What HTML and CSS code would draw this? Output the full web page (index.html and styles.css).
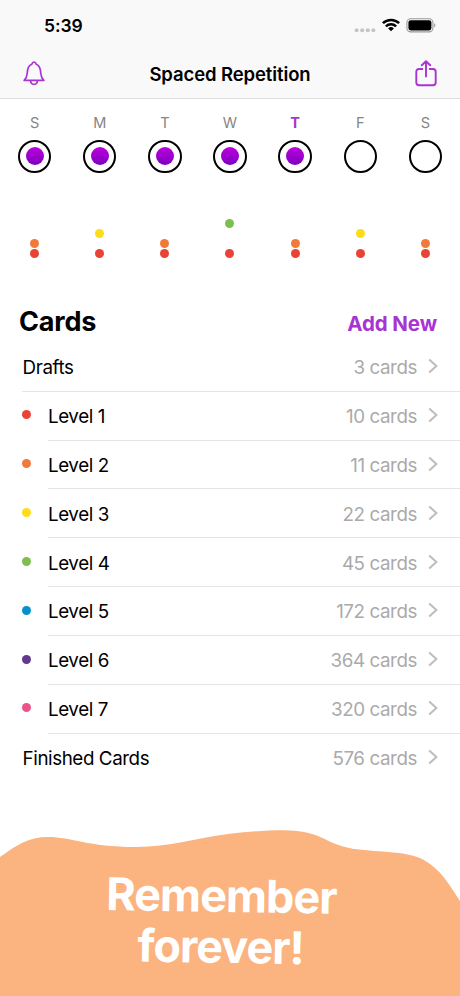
FILE: index.html
```html
<!DOCTYPE html>
<html lang="en">
<head>
    <meta charset="UTF-8">
    <meta name="viewport" content="width=device-width, initial-scale=1.0">
    <title>Spaced Repetition</title>
    <link rel="stylesheet" href="styles.css">
</head>
<body>

<header class="header">
    <div class="status-bar">
        <span class="time">5:39</span>
        <div class="status-icons">
            <svg class="signal" width="22" height="14" viewBox="0 0 22 14" fill="#c4c4c4">
                <circle cx="2.6" cy="7.2" r="2"/><circle cx="8.2" cy="7.2" r="2"/><circle cx="13.8" cy="7.2" r="2"/><circle cx="19.4" cy="7.2" r="2"/>
            </svg>
            <svg class="wifi" width="18" height="14" viewBox="0 0 18 14" fill="none" stroke="#000" stroke-width="2.5">
                <path d="M0.9 5.2A11.6 11.6 0 0 1 17.1 5.2"/>
                <path d="M3.9 8.4A7.3 7.3 0 0 1 14.1 8.4"/>
                <path d="M9 13.2L6.1 10.4A4.1 4.1 0 0 1 11.9 10.4Z" fill="#000" stroke="none"/>
            </svg>
            <svg class="battery" width="30" height="15" viewBox="0 0 30 15">
                <rect x="0.9" y="0.7" width="26" height="13.2" rx="3.8" fill="none" stroke="#999" stroke-width="1.1"/>
                <rect x="2.4" y="2.2" width="23" height="10.2" rx="2.3"/>
                <path d="M28.2 5.2C29.8 5.8 29.8 8.8 28.2 9.4Z" fill="#999"/>
            </svg>
        </div>
    </div>
    <nav class="nav-bar">
        <svg width="22" height="26" viewBox="0 0 22 26" fill="none" stroke="#a834d2" stroke-width="1.7" stroke-linejoin="round" stroke-linecap="round">
            <path d="M1.2 19.4C3.3 17.2 4 15.5 4.2 12.5C4.4 6.5 6.2 4.1 8.8 3.2C9.2 1.7 10 1.2 11 1.2C12 1.2 12.8 1.7 13.2 3.2C15.8 4.1 17.6 6.5 17.8 12.5C18 15.5 18.7 17.2 20.8 19.4Z"/>
            <path d="M7.6 19.8C7.9 24.6 14.1 24.6 14.4 19.8"/>
        </svg>
        <h1>Spaced Repetition</h1>
        <svg class="share" width="22" height="27" viewBox="0 0 22 27" fill="none" stroke="#a834d2" stroke-width="1.9" stroke-linejoin="round" stroke-linecap="round">
            <path d="M7.3 9H4C2.3 9 1.3 10 1.3 11.7V22.6C1.3 24.3 2.3 25.3 4 25.3H18C19.7 25.3 20.7 24.3 20.7 22.6V11.7C20.7 10 19.7 9 18 9H14.7"/>
            <path d="M11 16.5V1.5M6.8 5.3L11 1.3L15.2 5.3"/>
        </svg>
    </nav>
</header>

<main>
    <section class="week">
        <div class="day">
            <span class="day-name">S</span>
            <div class="ring done"></div>
            <div class="levels"><i class="dot level-2"></i><i class="dot level-1"></i></div>
        </div>
        <div class="day">
            <span class="day-name">M</span>
            <div class="ring done"></div>
            <div class="levels"><i class="dot level-3"></i><i class="dot level-1"></i></div>
        </div>
        <div class="day">
            <span class="day-name">T</span>
            <div class="ring done"></div>
            <div class="levels"><i class="dot level-2"></i><i class="dot level-1"></i></div>
        </div>
        <div class="day">
            <span class="day-name">W</span>
            <div class="ring done"></div>
            <div class="levels"><i class="dot level-4"></i><i class="dot level-1"></i></div>
        </div>
        <div class="day">
            <span class="day-name today">T</span>
            <div class="ring done"></div>
            <div class="levels"><i class="dot level-2"></i><i class="dot level-1"></i></div>
        </div>
        <div class="day">
            <span class="day-name">F</span>
            <div class="ring"></div>
            <div class="levels"><i class="dot level-3"></i><i class="dot level-1"></i></div>
        </div>
        <div class="day">
            <span class="day-name">S</span>
            <div class="ring"></div>
            <div class="levels"><i class="dot level-2"></i><i class="dot level-1"></i></div>
        </div>
    </section>

    <div class="cards-header">
        <h2>Cards</h2>
        <a class="add-new">Add New</a>
    </div>

    <ul class="cards">
        <li class="plain"><div class="row"><span>Drafts</span><span class="count">3 cards</span><svg class="chevron" viewBox="0 0 10 16"><path d="M1.2 1.4L8.4 8L1.2 14.6"/></svg></div></li>
        <li><i class="dot level-1"></i><div class="row"><span>Level 1</span><span class="count">10 cards</span><svg class="chevron" viewBox="0 0 10 16"><path d="M1.2 1.4L8.4 8L1.2 14.6"/></svg></div></li>
        <li><i class="dot level-2"></i><div class="row"><span>Level 2</span><span class="count">11 cards</span><svg class="chevron" viewBox="0 0 10 16"><path d="M1.2 1.4L8.4 8L1.2 14.6"/></svg></div></li>
        <li><i class="dot level-3"></i><div class="row"><span>Level 3</span><span class="count">22 cards</span><svg class="chevron" viewBox="0 0 10 16"><path d="M1.2 1.4L8.4 8L1.2 14.6"/></svg></div></li>
        <li><i class="dot level-4"></i><div class="row"><span>Level 4</span><span class="count">45 cards</span><svg class="chevron" viewBox="0 0 10 16"><path d="M1.2 1.4L8.4 8L1.2 14.6"/></svg></div></li>
        <li><i class="dot level-5"></i><div class="row"><span>Level 5</span><span class="count">172 cards</span><svg class="chevron" viewBox="0 0 10 16"><path d="M1.2 1.4L8.4 8L1.2 14.6"/></svg></div></li>
        <li><i class="dot level-6"></i><div class="row"><span>Level 6</span><span class="count">364 cards</span><svg class="chevron" viewBox="0 0 10 16"><path d="M1.2 1.4L8.4 8L1.2 14.6"/></svg></div></li>
        <li><i class="dot level-7"></i><div class="row"><span>Level 7</span><span class="count">320 cards</span><svg class="chevron" viewBox="0 0 10 16"><path d="M1.2 1.4L8.4 8L1.2 14.6"/></svg></div></li>
        <li class="plain"><div class="row"><span>Finished Cards</span><span class="count">576 cards</span><svg class="chevron" viewBox="0 0 10 16"><path d="M1.2 1.4L8.4 8L1.2 14.6"/></svg></div></li>
    </ul>
</main>

<footer class="banner">
    <svg class="wave" width="460" height="90" viewBox="0 0 460 90">
        <path d="M0 37C17 25 28 17 48 17C72 17 87 27 136 27C169 27 197 18 230 13.8C249 11.5 267 10.3 283 10.3C325 10.3 323 25.5 359 29.6C388 32.8 406 31.5 423 39.5C441 49 450 66 460 81V90H0Z" fill="#fbb37f"/>
    </svg>
    <p class="slogan">Remember<br>forever!</p>
</footer>

</body>
</html>
```
FILE: styles.css
```css
/* General Styling */
* {
    box-sizing: border-box;
}
body {
    font-family: Inter, "Liberation Sans", sans-serif;
    display: flex;
    flex-direction: column;
    width: 460px;
    height: 996px;
    margin: 0;
    overflow: hidden;
    background-color: #fff;
    color: #000;
}
h1, h2, p, ul {
    margin: 0;
    padding: 0;
}
svg {
    display: block;
    flex-shrink: 0;
}

/* Header */
.header {
    height: 99px;
    background-color: #f9f9f9;
    border-bottom: 1px solid #dedede;
}
.status-bar {
    display: flex;
    justify-content: space-between;
    align-items: center;
    height: 50px;
    padding: 0 24px 0 44px;
}
.time {
    font-size: 17.5px;
    font-weight: 600;
    letter-spacing: -0.1px;
}
.status-icons {
    display: flex;
    align-items: center;
    gap: 6px;
}
.signal {
    margin-top: 9px;
}
.nav-bar {
    display: flex;
    justify-content: space-between;
    align-items: center;
    height: 48px;
    padding: 0 23px;
}
.share {
    margin-bottom: 2px;
}
h1 {
    font-size: 18.5px;
    font-weight: 600;
    letter-spacing: -0.1px;
}

/* Week */
.week {
    display: grid;
    grid-template-columns: repeat(7, 1fr);
    height: 199px;
    padding: 13.5px 2px 0;
}
.day {
    display: flex;
    flex-direction: column;
    align-items: center;
}
.day-name {
    height: 20px;
    font-size: 14.5px;
    line-height: 20px;
    color: #858585;
}
.today {
    font-weight: 700;
    color: #a834d2;
}
.ring {
    display: flex;
    justify-content: center;
    align-items: center;
    width: 33.5px;
    height: 33.5px;
    margin-top: 7px;
    border: 2.4px solid #000;
    border-radius: 50%;
}
.done::before {
    content: "";
    width: 18px;
    height: 18px;
    border-radius: 50%;
    background: linear-gradient(#bd00df, #7d00be);
}
.levels {
    display: grid;
    grid-template-rows: repeat(4, 10px);
    align-items: center;
    margin-top: 45px;
}
.dot {
    width: 9px;
    height: 9px;
    border-radius: 50%;
}
.level-1 { grid-row: 4; background-color: #e84335; }
.level-2 { grid-row: 3; background-color: #f17a3a; }
.level-3 { grid-row: 2; background-color: #fddc18; }
.level-4 { grid-row: 1; background-color: #7cc04b; }
.level-5 { background-color: #078fcd; }
.level-6 { background-color: #623991; }
.level-7 { background-color: #e9558b; }

/* Cards */
.cards-header {
    display: flex;
    justify-content: space-between;
    align-items: baseline;
    height: 44.8px;
    padding: 7px 23px 0 19px;
}
h2 {
    font-size: 27px;
    font-weight: 700;
    letter-spacing: -0.2px;
}
.add-new {
    font-size: 20.5px;
    font-weight: 700;
    letter-spacing: -0.1px;
    color: #a834d2;
}
.cards {
    list-style: none;
}
.cards li {
    display: flex;
    align-items: center;
    height: 48.9px;
    padding-left: 22px;
    font-size: 18.8px;
    letter-spacing: -0.42px;
}
.cards .dot {
    margin: 0 17px 3px 0;
}
.row {
    display: flex;
    flex: 1;
    align-items: center;
    height: 100%;
    padding: 1.4px 22px 0 0;
    border-bottom: 1px solid #e4e4e4;
}
.plain .row {
    padding-left: 0.6px;
}
.cards li:last-child .row {
    border-bottom: none;
    padding-top: 0;
}
.count {
    margin-left: auto;
    color: #aaa;
}
.chevron {
    width: 10px;
    height: 16px;
    margin: 0 0 3px 11px;
    fill: none;
    stroke: #bdbdbd;
    stroke-width: 2;
}

/* Banner */
.banner {
    height: 176px;
    margin-top: auto;
    background: linear-gradient(#fbb37f, #fbb37f) no-repeat 0 89px;
}
.slogan {
    margin-top: -40px;
    padding-right: 18px;
    font-size: 45px;
    font-weight: 700;
    line-height: 51px;
    letter-spacing: -1px;
    text-align: center;
    color: #fff;
    transform: rotate(0.9deg);
}
```
